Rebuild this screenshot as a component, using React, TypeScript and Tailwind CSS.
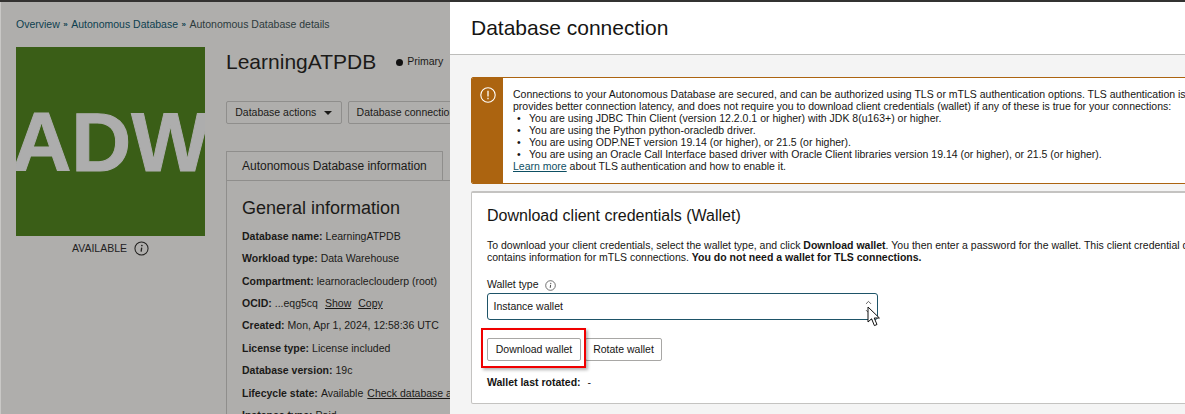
import { ChevronUp, ChevronDown } from 'lucide-react';

type InfoRow = {
  label: string;
  value: string;
  links?: string[];
  linkClass?: string;
};

const infoRows: InfoRow[] = [
  { label: 'Database name:', value: 'LearningATPDB' },
  { label: 'Workload type:', value: 'Data Warehouse' },
  { label: 'Compartment:', value: 'learnoracleclouderp (root)' },
  { label: 'OCID:', value: '...eqg5cq', links: ['Show', 'Copy'], linkClass: 'ml-[4px]' },
  { label: 'Created:', value: 'Mon, Apr 1, 2024, 12:58:36 UTC' },
  { label: 'License type:', value: 'License included' },
  { label: 'Database version:', value: '19c' },
  { label: 'Lifecycle state:', value: 'Available', links: ['Check database availability'], linkClass: 'ml-[1px]' },
  { label: 'Instance type:', value: 'Paid' },
];

const bullets = [
  'You are using JDBC Thin Client (version 12.2.0.1 or higher) with JDK 8(u163+) or higher.',
  'You are using the Python python-oracledb driver.',
  'You are using ODP.NET version 19.14 (or higher), or 21.5 (or higher).',
  'You are using an Oracle Call Interface based driver with Oracle Client libraries version 19.14 (or higher), or 21.5 (or higher).',
];

function InfoIcon({ size }: { size: number }) {
  return (
    <svg width={size} height={size} viewBox="0 0 16 16" fill="none" className="shrink-0">
      <circle cx="8" cy="8" r="7" stroke="currentColor" strokeWidth="1.1" />
      <circle cx="8.4" cy="4.8" r="0.9" fill="currentColor" />
      <path d="M8.2 7 L7.6 11.4" stroke="currentColor" strokeWidth="1.4" />
    </svg>
  );
}

function DetailsPage() {
  return (
    <div className="w-[450px] shrink-0 overflow-hidden border-l border-[#c9c8c6] bg-[#afaeac] pl-[15px] text-[#1b1a18]">
      <div className="flex h-[45px] items-center gap-[3.5px] text-[10.5px] text-[#0d3f4f]">
        <span>Overview</span>
        <span className="text-[8px] font-bold">»</span>
        <span>Autonomous Database</span>
        <span className="text-[8px] font-bold">»</span>
        <span className="text-[#2c3a3c]">Autonomous Database details</span>
      </div>

      <div className="flex gap-[21px]">
        <div className="w-[189px] shrink-0">
          <div className="flex h-[189px] items-center justify-center overflow-hidden bg-[#3a5e17]">
            <span className="pt-[1px] text-[83px] leading-none font-bold text-[#adadad] [-webkit-text-stroke:1px_#adadad]">
              ADW
            </span>
          </div>
          <div className="mt-[5px] flex items-center justify-center gap-[7px] text-[10.5px] text-[#22211f]">
            AVAILABLE
            <InfoIcon size={15} />
          </div>
        </div>

        <div className="w-[260px] shrink-0">
          <div className="flex h-[30px] items-center">
            <h1 className="text-[21px] text-[#1b1a18]">LearningATPDB</h1>
            <span className="ml-[20px] h-[7px] w-[7px] rounded-full bg-[#111]" />
            <span className="ml-[4px] text-[10.5px]">Primary</span>
          </div>

          <div className="mt-[24px] flex gap-[6px] text-[10.5px]">
            <div className="flex h-[23px] w-[117px] items-center justify-center gap-[8px] rounded-[2px] border border-[#8f8e8c]">
              Database actions
              <span className="h-0 w-0 border-x-[4px] border-t-[4px] border-x-transparent border-t-[#1b1a18]" />
            </div>
            <div className="flex h-[23px] w-[140px] items-center rounded-[2px] border border-[#8f8e8c] pl-2 whitespace-nowrap">
              Database connection
            </div>
          </div>

          <div className="mt-[27px] flex h-[29px] w-[217px] items-center rounded-t-[1px] border border-b-0 border-[#8f8e8c] pl-[15px] text-[12px]">
            Autonomous Database information
          </div>
          <div className="h-[240px] border-t border-l border-[#8f8e8c] pt-[15px] pl-[15px] whitespace-nowrap">
            <h2 className="text-[18px] leading-[24px]">General information</h2>
            <div className="mt-[5.5px] text-[10.5px]">
              {infoRows.map((row) => (
                <div key={row.label} className="flex h-[22.4px] items-center gap-[3px]">
                  <span className="font-bold">{row.label}</span>
                  <span>{row.value}</span>
                  {row.links?.map((link) => (
                    <span key={link} className={`underline ${row.linkClass}`}>
                      {link}
                    </span>
                  ))}
                </div>
              ))}
            </div>
          </div>
        </div>
      </div>
    </div>
  );
}

function ConnectionPanel() {
  return (
    <div className="relative min-w-0 flex-1 overflow-hidden bg-[#f4f4f4] text-[#161513]">
      <div className="flex h-[53px] items-center border-b border-[#bdbdbb] bg-white pl-[21px]">
        <h1 className="text-[21px]">Database connection</h1>
      </div>

      <div className="w-[900px] pt-[22px] pl-[21px]">
        <div className="flex h-[107px] overflow-hidden rounded-[2px] border border-[#ac6410] bg-white text-[10.5px] leading-[12px]">
          <div className="flex w-[31px] shrink-0 justify-center bg-[#ac6410] pt-[9px] text-white">
            <svg width="16" height="16" viewBox="0 0 16 16" fill="none">
              <circle cx="8" cy="8" r="7.2" stroke="currentColor" strokeWidth="1.1" />
              <path d="M8 3.8 V9.4 M8 10.8 V12.2" stroke="currentColor" strokeWidth="1.3" />
            </svg>
          </div>
          <div className="pt-[10px] pl-[10px] whitespace-nowrap">
            <p>
              Connections to your Autonomous Database are secured, and can be authorized using TLS or mTLS
              authentication options. TLS authentication is
            </p>
            <p>
              provides better connection latency, and does not require you to download client credentials (wallet)
              if any of these is true for your connections:
            </p>
            <ul>
              {bullets.map((bullet) => (
                <li key={bullet} className="flex">
                  <span className="w-[16px] pl-[4px]">•</span>
                  {bullet}
                </li>
              ))}
            </ul>
            <p>
              <span className="text-[#0d4f63] underline">Learn more</span> about TLS authentication and how to
              enable it.
            </p>
          </div>
        </div>

        <div className="mt-[7px] h-[213px] rounded-[2px] border border-t-2 border-[#c4c3c1] bg-white pt-[13px] pl-[15px] text-[10.5px] whitespace-nowrap">
          <h2 className="text-[16px] leading-[20px]">Download client credentials (Wallet)</h2>
          <p className="mt-[13px] leading-[12px]">
            To download your client credentials, select the wallet type, and click{' '}
            <b className="font-bold">Download wallet</b>. You then enter a password for the wallet. This client
            credential download
          </p>
          <p className="leading-[12px]">
            contains information for mTLS connections.{' '}
            <b className="font-bold">You do not need a wallet for TLS connections.</b>
          </p>

          <div className="mt-[15px] flex h-[14px] items-center gap-[6px]">
            Wallet type
            <span className="text-[#444]">
              <InfoIcon size={11} />
            </span>
          </div>
          <div className="mt-[1px] flex h-[27px] w-[391px] items-center justify-between rounded-[3px] border-[1.5px] border-[#1e5468] pt-[1px] pr-[4px] pl-[5.5px]">
            Instance wallet
            <span className="flex flex-col text-[#333]">
              <ChevronUp size={9} strokeWidth={2} />
              <ChevronDown size={9} strokeWidth={2} />
            </span>
          </div>

          <div className="mt-[18px] flex h-[23px] gap-[4px]">
            <div className="flex w-[94px] items-center justify-center rounded-[2px] border border-[#a8a7a5]">
              Download wallet
            </div>
            <div className="flex w-[77px] items-center justify-center rounded-[2px] border border-[#a8a7a5]">
              Rotate wallet
            </div>
          </div>

          <div className="mt-[14px] flex gap-[7px]">
            <b className="font-bold">Wallet last rotated:</b>
            <span>-</span>
          </div>
        </div>
      </div>

      {/* annotation + cursor sit over the form */}
      <div className="absolute top-[326px] left-[31px] h-[40px] w-[105px] border-2 border-[#f00000] shadow-[2px_2px_3px_rgba(0,0,0,0.3)]" />
      <svg className="absolute top-[304px] left-[417px]" width="14" height="21" viewBox="0 0 14 21">
        <path d="M1 1 V16 L4.6 12.8 L7.4 19.6 L10 18.5 L7.2 12 L12.4 12 Z" fill="#fff" stroke="#111" strokeWidth="1" />
      </svg>
    </div>
  );
}

export default function App() {
  return (
    <div className="flex h-[414px] w-[1185px] flex-col overflow-hidden font-['Liberation_Sans',Arial,sans-serif]">
      <div className="h-[2px] shrink-0 bg-[#333231]" />
      <div className="flex min-h-0 flex-1">
        <DetailsPage />
        <ConnectionPanel />
      </div>
    </div>
  );
}
